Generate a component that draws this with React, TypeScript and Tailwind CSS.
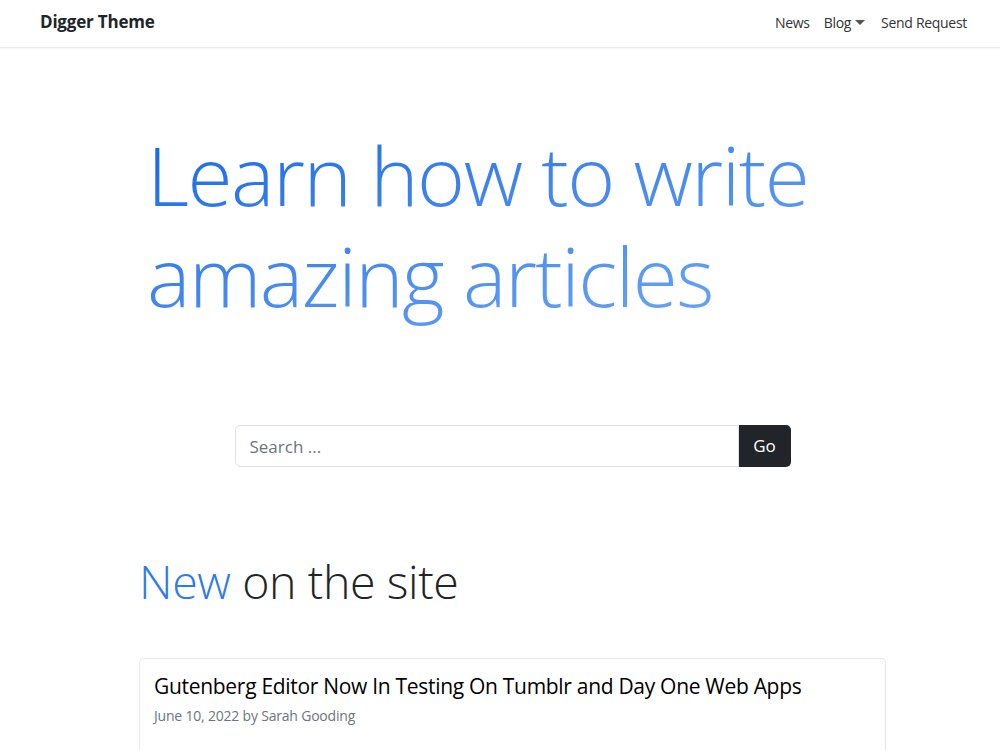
import React from "react";

export default function App() {
  return (
    <div className="min-h-[750px] bg-white text-[#212529]" style={{ fontFamily: '"Open Sans", "Noto Sans", sans-serif' }}>
      <nav className="h-[48px] border-b border-[#ececec] flex items-center justify-between pl-[40px] pr-[33px] pb-[3px] shadow-[0_1px_2px_rgba(0,0,0,0.03)]">
        <span className="text-[17px] font-bold tracking-[-0.2px] text-[#212529]">Digger Theme</span>
        <ul className="flex items-center text-[14px] text-[#333] tracking-[-0.3px]">
          <li className="mr-[14px]">News</li>
          <li className="mr-[16px] flex items-center">
            Blog
            <svg width="10" height="6" viewBox="0 0 10 6" className="ml-[4px] mt-[1px]"><path d="M0 0h10L5 5z" fill="#555" /></svg>
          </li>
          <li>Send Request</li>
        </ul>
      </nav>
      <main className="pl-[139px] w-[886px]">
        <h1 className="mt-[76px] pl-[8px] text-[82px] leading-[101px] font-light tracking-[-1.5px] bg-gradient-to-br from-[#0f66e6] to-[#72a9f7] bg-clip-text text-transparent w-fit">
          <span className="block">Learn how to write</span>
          <span className="block">amazing articles</span>
        </h1>
        <form className="mt-[99px] flex justify-center" onSubmit={(e) => e.preventDefault()}>
          <input
            placeholder="Search ..."
            className="w-[504px] h-[42px] border border-[#dee2e6] rounded-l-[5px] px-[14px] text-[17px] placeholder-[#6c757d] outline-none"
          />
          <button className="w-[52px] h-[42px] bg-[#212529] text-white text-[17px] rounded-r-[5px]">Go</button>
        </form>
        <h2 className="mt-[87px] text-[46.5px] font-light leading-[1.2] tracking-[-0.4px]">
          <span className="text-[#2f7be8]">New</span> on the site
        </h2>
        <div className="mt-[48px] border border-[#e5e7ea] rounded-[5px] px-[14px] pt-[14px] pb-[30px]">
          <h3 className="text-[21px] font-medium leading-[1.3] text-black tracking-[-0.3px]">
            Gutenberg Editor Now In Testing On Tumblr and Day One Web Apps
          </h3>
          <p className="mt-[5px] text-[14px] text-[#6c757d] tracking-[-0.2px]">June 10, 2022 by Sarah Gooding</p>
        </div>
      </main>
    </div>
  );
}
